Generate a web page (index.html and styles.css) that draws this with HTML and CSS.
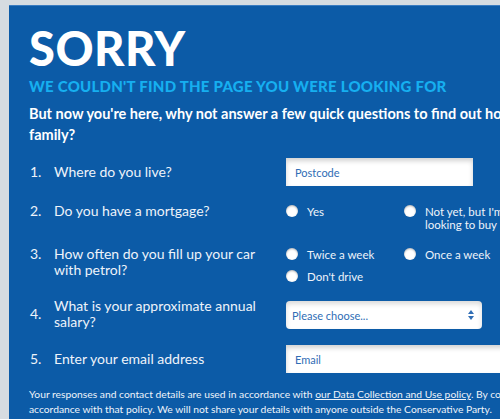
FILE: index.html
```html
<!DOCTYPE html>
<html lang="en">
<head>
    <meta charset="UTF-8">
    <title>Sorry - page not found</title>
    <link rel="stylesheet" href="styles.css">
</head>
<body>
    <div class="panel">
        <h1>SORRY</h1>
        <h2>WE COULDN'T FIND THE PAGE YOU WERE LOOKING FOR</h2>
        <p class="intro">But now you're here, why not answer a few quick questions to find out how we can help you and your<br>family?</p>

        <form class="survey">
            <div class="row first">
                <span class="num">1.</span>
                <label class="question" for="postcode">Where do you live?</label>
                <input id="postcode" class="field" type="text" placeholder="Postcode">
            </div>
            <div class="row top">
                <span class="num">2.</span>
                <span class="question">Do you have a mortgage?</span>
                <div class="options">
                    <label class="option"><input type="radio" name="mortgage"><span class="dot"></span>Yes</label>
                    <label class="option"><input type="radio" name="mortgage"><span class="dot"></span>Not yet, but I'm looking to buy</label>
                </div>
            </div>
            <div class="row top">
                <span class="num">3.</span>
                <span class="question">How often do you fill up your car with petrol?</span>
                <div class="options">
                    <label class="option"><input type="radio" name="petrol"><span class="dot"></span>Twice a week</label>
                    <label class="option"><input type="radio" name="petrol"><span class="dot"></span>Once a week</label>
                    <label class="option"><input type="radio" name="petrol"><span class="dot"></span>Don't drive</label>
                </div>
            </div>
            <div class="row">
                <span class="num">4.</span>
                <label class="question" for="salary">What is your approximate annual salary?</label>
                <div class="select">
                    <select id="salary">
                        <option>Please choose...</option>
                    </select>
                    <svg class="arrows" width="6" height="10" viewBox="0 0 6 10"><path d="M3 0L6 4H0Z M3 10L0 6H6Z" fill="#2f6db5"/></svg>
                </div>
            </div>
            <div class="row">
                <span class="num">5.</span>
                <label class="question" for="email">Enter your email address</label>
                <input id="email" class="field wide" type="email" placeholder="Email">
            </div>
        </form>

        <p class="small">Your responses and contact details are used in accordance with <a href="#">our Data Collection and Use policy</a>. By completing this form you agree to be contacted in<br>accordance with that policy. We will not share your details with anyone outside the Conservative Party.</p>
    </div>
</body>
</html>
```

FILE: styles.css
```css
html, body {
    overflow: hidden;
}

body {
    margin: 0;
    padding: 5px 0 0 9px;
    background: #d6dce1;
    font-family: Lato, "Open Sans", sans-serif;
}

.panel {
    width: 760px;
    background: #0c5ba7;
    border-top: 1px solid #3a7cc0;
    padding: 14px 20px 20px 20px;
    color: #fff;
}

h1 {
    margin: 0;
    font-size: 47px;
    font-weight: 900;
    line-height: 56px;
    letter-spacing: 0.5px;
}

h2 {
    margin: 1px 0 0 0;
    font-size: 15px;
    font-weight: 900;
    color: #16aff0;
    letter-spacing: 0.25px;
}

.intro {
    margin: 8px 0 0 0;
    font-size: 14.5px;
    font-weight: 700;
    line-height: 21px;
    white-space: nowrap;
}

.survey {
    margin-top: 13px;
    display: flex;
    flex-direction: column;
    gap: 15px;
}

.row {
    display: grid;
    grid-template-columns: 25px 232px 1fr;
    align-items: center;
    font-size: 14px;
    line-height: 16px;
    color: #eef3fa;
}

.row.first {
    margin-bottom: 2px;
}

.row.top {
    align-items: start;
}

.num {
    padding-left: 1px;
}

.question {
    max-width: 205px;
}

.field {
    box-sizing: border-box;
    width: 187px;
    height: 28px;
    border: none;
    padding: 0 9px;
    font-family: Lato, sans-serif;
    font-size: 11px;
    box-shadow: inset 0 3px 5px rgba(0, 0, 0, 0.18);
    outline: none;
}

.field.wide {
    width: 260px;
}

.field::placeholder {
    color: #2f6db5;
}

.options {
    display: grid;
    grid-template-columns: 118px 112px;
    row-gap: 9px;
    padding-top: 2px;
    font-size: 11.5px;
    line-height: 13px;
}

.option {
    display: flex;
    align-items: flex-start;
    gap: 9px;
}

.option input {
    display: none;
}

.dot {
    flex: none;
    width: 12px;
    height: 12px;
    border-radius: 50%;
    background: #fff;
    box-shadow: inset 0 1px 2px rgba(0, 0, 0, 0.3);
}

.select {
    position: relative;
    width: 196px;
    margin-top: 2px;
}

.select select {
    box-sizing: border-box;
    width: 100%;
    height: 28px;
    border: none;
    border-radius: 4px;
    padding: 0 6px;
    background: #fff;
    color: #2f6db5;
    font-family: Lato, sans-serif;
    font-size: 11px;
    box-shadow: inset 0 3px 5px rgba(0, 0, 0, 0.15);
    appearance: none;
    -webkit-appearance: none;
}

.arrows {
    position: absolute;
    right: 8px;
    top: 9px;
}

.small {
    margin: 14px 0 0 0;
    font-size: 10.3px;
    line-height: 15px;
    color: #eef3fa;
    white-space: nowrap;
}

.small a {
    color: #eef3fa;
}
```
